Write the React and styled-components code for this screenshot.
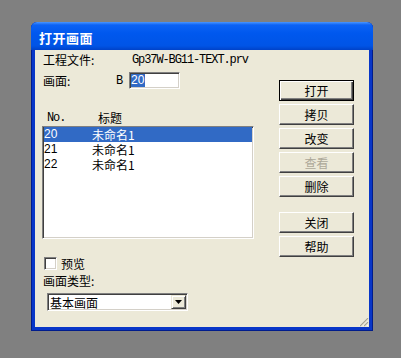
import styled, { createGlobalStyle } from "styled-components";

const GlobalStyle = createGlobalStyle`
  html, body {
    margin: 0;
    padding: 0;
    background: #808080;
  }
  body {
    font-family: "Noto Sans CJK SC", "Liberation Sans", sans-serif;
    font-size: 12px;
    color: #000;
  }
  * {
    box-sizing: border-box;
  }
`;

const pages = [
  { no: "20", title: "未命名1" },
  { no: "21", title: "未命名1" },
  { no: "22", title: "未命名1" },
];

const actions = [
  { label: "打开", isDefault: true },
  { label: "拷贝" },
  { label: "改变" },
  { label: "查看", disabled: true },
  { label: "删除" },
  { label: "关闭", gap: 15 },
  { label: "帮助" },
];

function ResizeGrip() {
  return (
    <Grip width="12" height="12" viewBox="0 0 12 12">
      <path d="M11 2 L2 11 M11 6 L6 11 M11 10 L10 11" stroke="#fff" strokeWidth="1" />
      <path d="M11 3 L3 11 M11 7 L7 11" stroke="#a8a595" strokeWidth="1.2" />
    </Grip>
  );
}

function App() {
  return (
    <Desktop>
      <GlobalStyle />

      <Window>

        <TitleBar>打开画面</TitleBar>

        <Body>

          <LeftColumn>

            <InfoRow $top={1} $h={16}>
              <Label $w={89}>工程文件:</Label>
              <Mono>Gp37W-BG11-TEXT.prv</Mono>
            </InfoRow>

            <InfoRow $top={4} $h={17}>
              <Label $w={73}>画面:</Label>
              <Mono $w={13}>B</Mono>
              <Field>
                <Selected>20</Selected>
              </Field>
            </InfoRow>

            <HeaderRow>
              <HeaderCell $w={51}>No.</HeaderCell>
              <HeaderTitle>标题</HeaderTitle>
            </HeaderRow>

            <ListBox>
              {pages.map((p, i) => (
                <ListRow key={p.no} $selected={i === 0}>
                  <NoCell>{p.no}</NoCell>
                  <span>{p.title}</span>
                </ListRow>
              ))}
            </ListBox>

            <CheckRow>
              <CheckBox />
              <span>预览</span>
            </CheckRow>

            <InfoRow $top={4} $h={14}>
              <Label>画面类型:</Label>
            </InfoRow>

            <Select>
              <SelectText>基本画面</SelectText>
              <DropButton>
                <svg width="7" height="4" viewBox="0 0 7 4">
                  <polygon points="0,0 7,0 3.5,4" fill="#000" />
                </svg>
              </DropButton>
            </Select>

          </LeftColumn>

          <ButtonColumn>
            {actions.map((a) => (
              <Button
                key={a.label}
                $default={a.isDefault}
                $gap={a.gap}
                disabled={a.disabled}
              >
                {a.label}
              </Button>
            ))}
          </ButtonColumn>

          <ResizeGrip />

        </Body>

      </Window>
    </Desktop>
  );
}

export default App;

const sunken = `
  border-top: 1px solid #808080;
  border-left: 1px solid #808080;
  border-right: 1px solid #fff;
  border-bottom: 1px solid #fff;
  box-shadow: inset 1px 1px #404040, inset -1px -1px #d4d0c8;
`;

const Desktop = styled.div`
  width: 401px;
  height: 358px;
  padding: 22px 0 0 31px;
  background: #808080;
  overflow: hidden;
`;

const Window = styled.div`
  width: 342px;
  height: 309px;
  display: flex;
  flex-direction: column;
  background: #0836c8;
  border-radius: 6px 6px 0 0;
  box-shadow: inset 0 0 0 1px #001c8c;
  overflow: hidden;
`;

const TitleBar = styled.div`
  height: 28px;
  flex: none;
  display: flex;
  align-items: center;
  padding: 3px 0 0 8px;
  background: linear-gradient(
    to bottom,
    #4a96ff 0px,
    #0c62f4 3px,
    #0058ee 40%,
    #0054e6 85%,
    #0042c8 100%
  );
  color: #fff;
  font-size: 13px;
  font-weight: bold;
  letter-spacing: 0.5px;
  line-height: 16px;
`;

const Body = styled.div`
  position: relative;
  flex: 1;
  margin: 0 4px 4px;
  padding: 1px 0 0 8px;
  background: #ece9d8;
  display: grid;
  grid-template-columns: 236px 75px;
  align-items: start;
`;

const LeftColumn = styled.div`
  display: flex;
  flex-direction: column;
  align-items: flex-start;
`;

const InfoRow = styled.div`
  display: flex;
  align-items: center;
  margin-top: ${(p) => p.$top || 0}px;
  height: ${(p) => p.$h}px;
  line-height: 14px;
`;

const Label = styled.span`
  width: ${(p) => (p.$w ? `${p.$w}px` : "auto")};
  flex: none;
`;

const Mono = styled.span`
  width: ${(p) => (p.$w ? `${p.$w}px` : "auto")};
  font-family: "Liberation Mono", "DejaVu Sans Mono", monospace;
  font-size: 12px;
  letter-spacing: -1.1px;
`;

const Field = styled.div`
  width: 51px;
  height: 17px;
  background: #fff;
  ${sunken}
  padding: 1px 0 0 1px;
  display: flex;
  align-items: flex-start;
`;

const Selected = styled.span`
  background: #316ac5;
  color: #fff;
  font-family: "Liberation Sans", sans-serif;
  font-size: 12px;
  line-height: 13px;
  padding: 0 1px 0 0;
`;

const HeaderRow = styled.div`
  display: flex;
  align-items: center;
  margin-top: 22px;
  height: 14px;
  padding-left: 4px;
  line-height: 14px;
`;

const HeaderCell = styled.span`
  width: ${(p) => p.$w}px;
  font-family: "Liberation Mono", "DejaVu Sans Mono", monospace;
  font-size: 12px;
  letter-spacing: -1.1px;
`;

const HeaderTitle = styled.span`
  font-size: 12px;
`;

const ListBox = styled.div`
  width: 212px;
  height: 113px;
  margin: 1px 0 0 -1px;
  padding: 0 1px;
  background: #fff;
  ${sunken}
`;

const ListRow = styled.div`
  display: flex;
  align-items: center;
  height: 15px;
  line-height: 15px;
  background: ${(p) => (p.$selected ? "#316ac5" : "transparent")};
  color: ${(p) => (p.$selected ? "#fff" : "#000")};
`;

const NoCell = styled.span`
  width: 48px;
  flex: none;
  font-family: "Liberation Sans", sans-serif;
  font-size: 12px;
`;

const CheckRow = styled.div`
  display: flex;
  align-items: center;
  gap: 4px;
  margin: 18px 0 0 1px;
  height: 13px;
  line-height: 14px;
`;

const CheckBox = styled.span`
  width: 13px;
  height: 13px;
  background: #fff;
  ${sunken}
`;

const Select = styled.div`
  display: flex;
  align-items: stretch;
  width: 141px;
  height: 18px;
  margin: 5px 0 0 4px;
  background: #fff;
  ${sunken}
  padding: 1px;
`;

const SelectText = styled.span`
  flex: 1;
  padding-left: 1px;
  line-height: 15px;
  font-size: 12px;
`;

const DropButton = styled.span`
  width: 15px;
  display: flex;
  align-items: center;
  justify-content: center;
  background: #ece9d8;
  border-top: 1px solid #ece9d8;
  border-left: 1px solid #ece9d8;
  border-right: 1px solid #404040;
  border-bottom: 1px solid #404040;
  box-shadow: inset 1px 1px #fff, inset -1px -1px #808080;
`;

const ButtonColumn = styled.div`
  display: flex;
  flex-direction: column;
  gap: 3px;
  padding-top: 29px;
`;

const Button = styled.button`
  width: 75px;
  height: 21px;
  margin-top: ${(p) => (p.$gap ? p.$gap - 3 : 0)}px;
  padding: 0;
  background: #ece9d8;
  font-family: "Noto Sans CJK SC", sans-serif;
  font-size: 12px;
  line-height: 14px;
  color: #000;
  outline: none;
  border-top: 1px solid ${(p) => (p.$default ? "#000" : "#fff")};
  border-left: 1px solid ${(p) => (p.$default ? "#000" : "#fff")};
  border-right: 1px solid ${(p) => (p.$default ? "#000" : "#404040")};
  border-bottom: 1px solid ${(p) => (p.$default ? "#000" : "#404040")};
  box-shadow: ${(p) =>
    p.$default
      ? "inset 1px 1px #fff, inset -1px -1px #404040, inset -2px -2px #808080"
      : "inset -1px -1px #808080"};

  &:disabled {
    color: #aca899;
  }
`;

const Grip = styled.svg`
  position: absolute;
  right: 0;
  bottom: 0;
`;
